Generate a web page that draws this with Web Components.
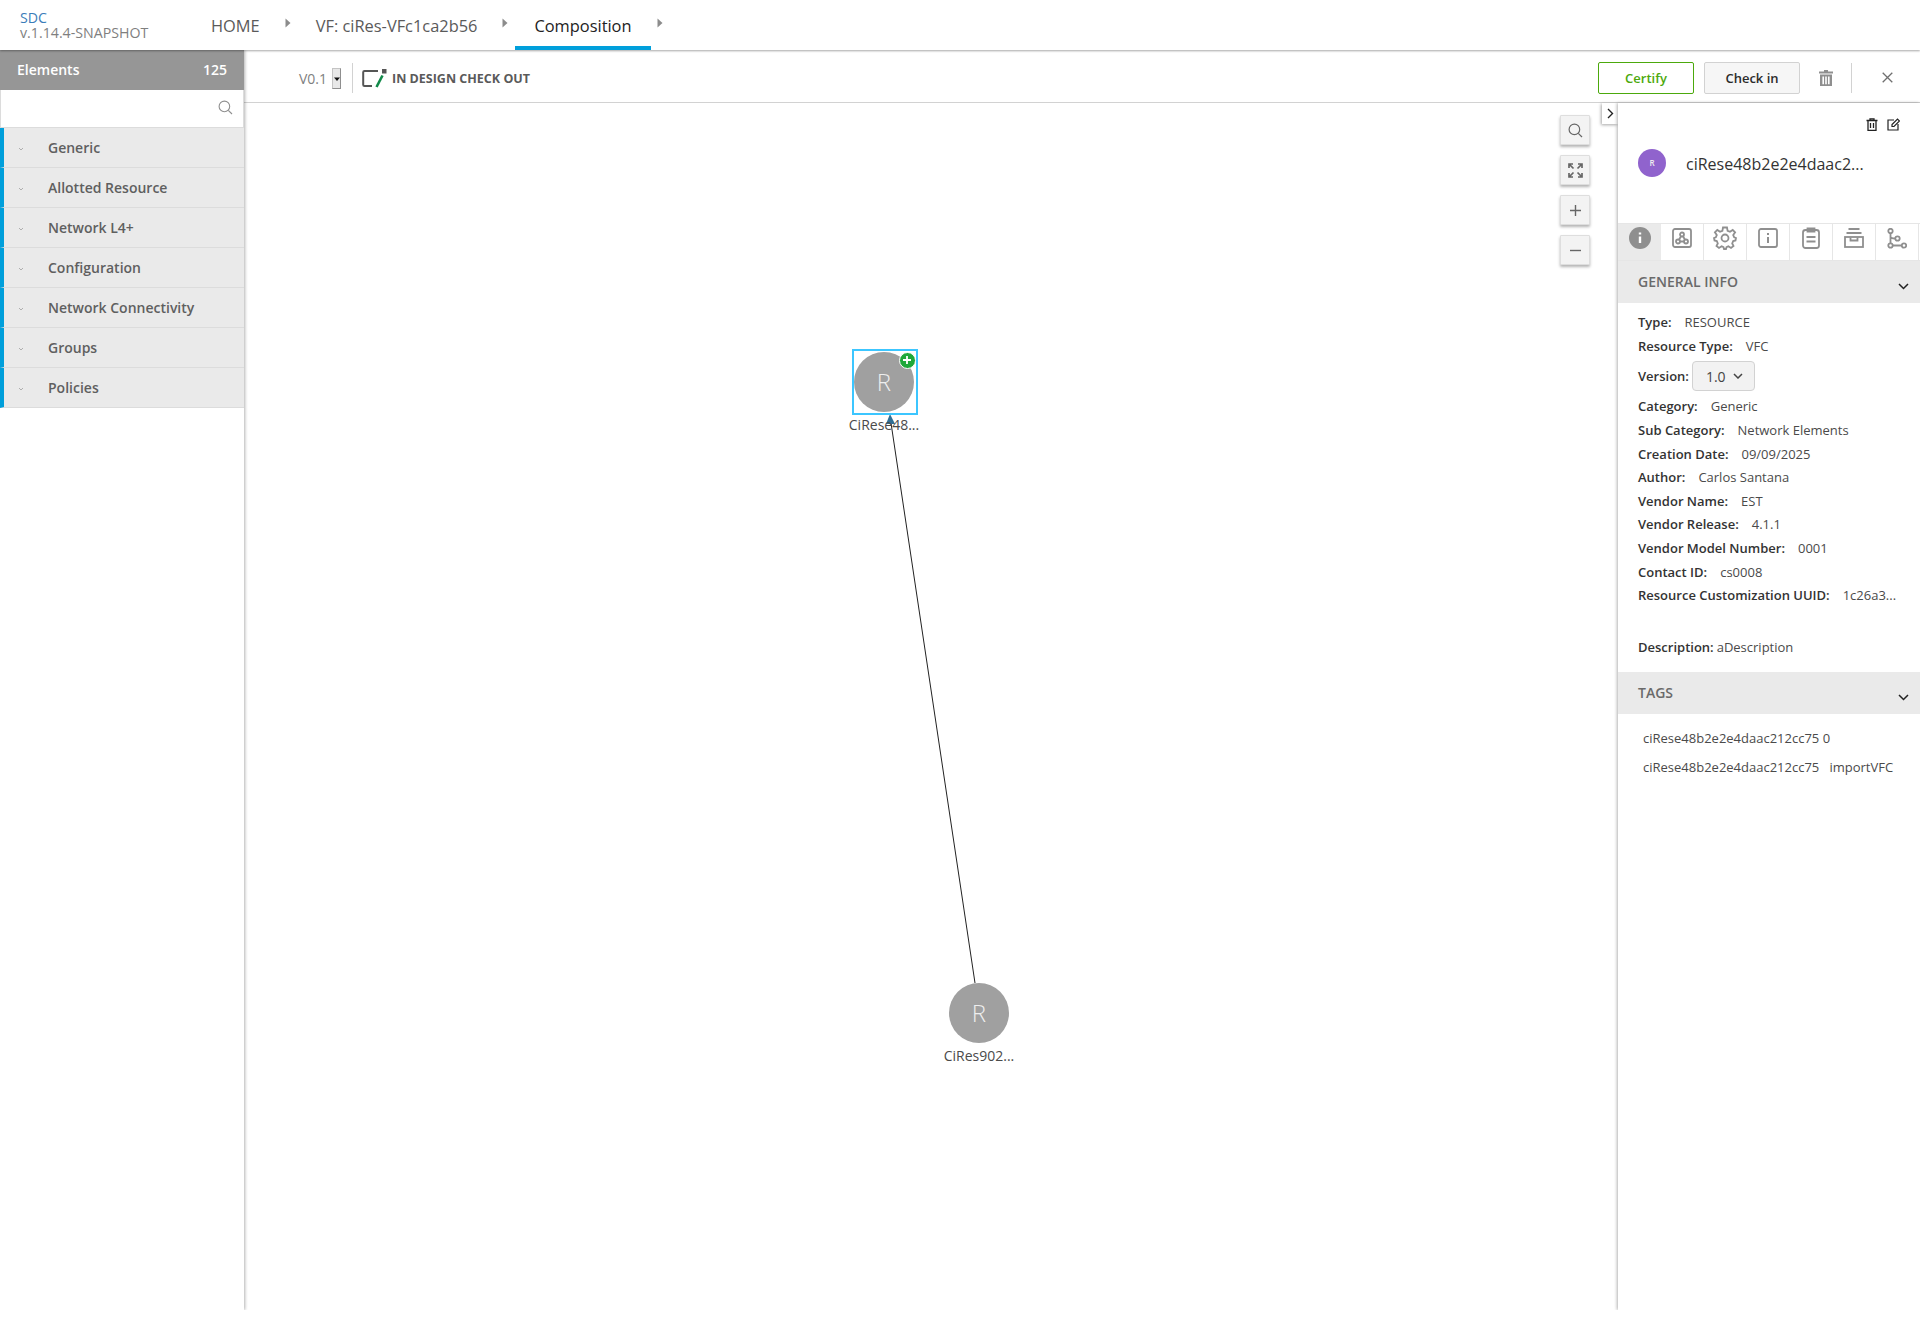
<!DOCTYPE html>
<html lang="en">
<head>
<meta charset="UTF-8" />
<title>SDC Composition</title>
<style>
  html, body { margin: 0; padding: 0; background: #fff; }
  body { font-family: "Open Sans", "Liberation Sans", sans-serif; color: #5a5a5a; }
</style>
</head>
<body>
<sdc-app></sdc-app>

<script>
  // small helper, every element just sets its html in an open shadow root
  class Base extends HTMLElement {
    connectedCallback() {
      if (this.shadowRoot) return;
      this.attachShadow({ mode: "open" });
      this.shadowRoot.innerHTML = this.render();
    }
  }

  class SdcApp extends Base {
    render() {
      return `<style>
        :host { display: flex; flex-direction: column; width: 1920px; height: 1310px; }
        .main { display: flex; flex: 1; min-height: 0; }
        .center { flex: 1; display: flex; flex-direction: column; min-width: 0; }
        .work { flex: 1; display: flex; min-height: 0; }
      </style>
      <sdc-header></sdc-header>
      <div class="main">
        <sdc-sidebar></sdc-sidebar>
        <div class="center">
          <sdc-toolbar></sdc-toolbar>
          <div class="work">
            <sdc-canvas></sdc-canvas>
            <sdc-panel></sdc-panel>
          </div>
        </div>
      </div>`;
    }
  }

  class SdcHeader extends Base {
    render() {
      const arrow = `<span class="arrow"><svg width="6" height="10" viewBox="0 0 6 10"><path d="M0.5 0.5 L5.5 5 L0.5 9.5Z" fill="#8c8c8c"/></svg></span>`;
      return `<style>
        :host { display: flex; height: 50px; box-sizing: border-box; background: #fff; position: relative; z-index: 3; box-shadow: 0 1px 2px rgba(0,0,0,.35); }
        .logo { width: 192px; box-sizing: border-box; padding: 10px 0 0 20px; font-size: 14.2px; line-height: 15px; color: #7f7f7f; }
        .logo b { display: block; font-weight: 400; color: #3b7db9; }
        .item { box-sizing: border-box; height: 50px; padding: 1px 19px 0; line-height: 50px; font-size: 16.4px; color: #5a5a5a; white-space: nowrap; }
        .item.on { color: #222; border-bottom: 4px solid #009fdb; margin-left: 1px; }
        .arrow { width: 18px; display: flex; justify-content: center; padding-top: 18px; box-sizing: border-box; }
      </style>
      <div class="logo"><b>SDC</b>v.1.14.4-SNAPSHOT</div>
      <div class="item">HOME</div>${arrow}
      <div class="item">VF: ciRes-VFc1ca2b56</div>${arrow}
      <div class="item on">Composition</div>${arrow}`;
    }
  }

  class SdcSidebar extends Base {
    render() {
      const names = ["Generic", "Allotted Resource", "Network L4+", "Configuration", "Network Connectivity", "Groups", "Policies"];
      return `<style>
        :host { display: block; width: 244px; flex: none; background: #fff; box-shadow: 1px 0 3px rgba(0,0,0,.3); position: relative; z-index: 2; }
        .top { height: 40px; box-sizing: border-box; padding: 0 17px 2px; background: #969696; color: #fff; display: flex; justify-content: space-between; align-items: center; font-size: 14px; font-weight: 600; }
        .search { height: 38px; box-sizing: border-box; border: 1px solid #dcdcdc; border-top: 0; background: #fff; display: flex; justify-content: flex-end; align-items: center; padding: 0 10px 2px 0; }
        .row { height: 40px; box-sizing: border-box; background: #eaeaea; border-left: 4px solid #009fdb; border-bottom: 1px solid #dcdcdc; display: flex; align-items: center; font-size: 14px; font-weight: 600; color: #5f5f5f; padding-left: 14px; }
        .row svg { width: 6px; margin-right: 24px; margin-top: 2px; }
      </style>
      <div class="top"><span>Elements</span><span>125</span></div>
      <div class="search"><svg width="15" height="15" viewBox="0 0 15 15" fill="none" stroke="#8f8f8f" stroke-width="1.1"><circle cx="6.4" cy="6.4" r="5.3"/><path d="M10.3 10.3 L14 14"/></svg></div>
      ${names.map(n => `<div class="row"><svg height="4" viewBox="0 0 6 4"><path d="M1 1 L3 3 L5 1" fill="none" stroke="#a0a0a0" stroke-width=".8"/></svg>${n}</div>`).join("")}`;
    }
  }

  class SdcToolbar extends Base {
    render() {
      return `<style>
        :host { display: flex; align-items: center; height: 53px; box-sizing: border-box; border-bottom: 1px solid #d2d2d2; padding: 3px 0 0 55px; background: #fff; }
        .ver { font-size: 14px; color: #7f7f7f; margin-top: 2px; }
        .sel { width: 9px; height: 21px; margin: 2px 0 0 5px; box-sizing: border-box; background: #e8e8e8; border: 1px solid #c4c4c4; border-right-color: #8f8f8f; border-bottom-color: #8f8f8f; display: flex; align-items: center; justify-content: center; }
        .sep { width: 1px; height: 30px; background: #d2d2d2; }
        .state { font-size: 12.5px; font-weight: 700; color: #5a5a5a; margin: 2px 0 0 5px; }
        .btn { box-sizing: border-box; width: 96px; height: 32px; border-radius: 2px; display: flex; align-items: center; justify-content: center; font-size: 13px; font-weight: 600; }
        .cert { margin-left: auto; border: 1px solid #4ca90c; color: #4ca90c; }
        .check { margin-left: 10px; border: 1px solid #d2d2d2; background: #f6f6f6; color: #2b2b2b; }
        svg { display: block; }
      </style>
      <span class="ver">V0.1</span>
      <span class="sel"><svg width="6" height="4" viewBox="0 0 6 4"><path d="M0 0.5H6L3 4Z" fill="#111"/></svg></span>
      <span class="sep" style="margin-left:11px"></span>
      <svg style="margin-left:9px" width="25" height="20" viewBox="0 0 25 20">
        <path d="M16 3H2.5A1.300 1.300 0 0 0 1.200 4.300V16.700A1.300 1.300 0 0 0 2.500 18H10" fill="none" stroke="#555" stroke-width="2"/>
        <rect x="20" y="1" width="4.500" height="4.500" fill="#555"/>
        <path d="M20.500 7.500L14.500 19" stroke="#128a4a" stroke-width="2.600"/>
      </svg>
      <span class="state">IN DESIGN CHECK OUT</span>
      <span class="btn cert">Certify</span>
      <span class="btn check">Check in</span>
      <svg style="margin-left:19px" width="14" height="16" viewBox="0 0 14 16" fill="#8f8f8f"><path d="M5 0H9V1.500H14V3.500H0V1.500H5Z"/><path d="M1 4.500H13V16H1ZM3.400 6.500V14.300H5V6.500ZM6.200 6.500V14.300H7.800V6.500ZM9 6.500V14.300H10.600V6.500Z" fill-rule="evenodd"/></svg>
      <span class="sep" style="margin-left:18px"></span>
      <svg style="margin:0 27px 0 30px" width="11" height="11" viewBox="0 0 11 11" stroke="#6f6f6f" stroke-width="1.300"><path d="M.7 .7L10.300 10.300M10.300 .7L.7 10.300"/></svg>`;
    }
  }

  class SdcNode extends Base {
    render() {
      const sel = this.hasAttribute("selected");
      return `<style>
        :host { position: absolute; left: ${this.getAttribute("x")}px; top: ${this.getAttribute("y")}px; width: 0; height: 0; }
        .c { position: absolute; left: -30px; top: -30px; width: 60px; height: 60px; border-radius: 50%; background: #a0a0a0; color: #eee; font-size: 24px; font-weight: 300; line-height: 60px; text-align: center; }
        .box { position: absolute; left: -32.500px; top: -33px; width: 66px; height: 66px; box-sizing: border-box; border: 2px solid #3cc6ff; }
        .plus { position: absolute; left: 14.500px; top: -30.500px; width: 17px; height: 17px; box-sizing: border-box; border-radius: 50%; background: #1ea83a; border: 1.500px solid #fff; }
        .plus svg { display: block; }
        .label { position: absolute; left: -50px; width: 100px; top: 33px; text-align: center; font-size: 14px; line-height: 20px; color: #4a4a4a; white-space: nowrap; }
      </style>
      <div class="c">R</div>
      ${sel ? `<div class="box"></div><div class="plus"><svg width="14" height="14" viewBox="0 0 14 14"><path d="M7 3V11M3 7H11" stroke="#fff" stroke-width="1.800"/></svg></div>` : ""}
      <div class="label"><slot></slot></div>`;
    }
  }

  class SdcZoomBtn extends Base {
    render() {
      return `<style>
        :host { display: flex; width: 30px; height: 30px; box-sizing: border-box; background: #f3f3f3; border: 1px solid #dedede; box-shadow: 0 2px 3px rgba(0,0,0,.3); align-items: center; justify-content: center; border-radius: 1px; }
      </style><slot></slot>`;
    }
  }

  class SdcCanvas extends Base {
    render() {
      return `<style>
        :host { display: block; flex: 1; position: relative; background: #fff; }
        .edge { position: absolute; left: 0; top: 0; width: 100%; height: 100%; }
        .zoom { position: absolute; right: 28px; top: 12px; display: flex; flex-direction: column; gap: 10px; }
        .tab { position: absolute; right: 0; top: 0; width: 16px; height: 21px; background: #fff; box-shadow: -1px 1px 3px rgba(0,0,0,.35); display: flex; align-items: center; justify-content: center; }
        svg { display: block; }
      </style>
      <svg class="edge">
        <line x1="731" y1="880" x2="647" y2="320" stroke="#222" stroke-width="1"/>
        <path d="M646 311 L651 321 L642 321Z" fill="#2f6f95"/>
      </svg>
      <sdc-node x="640" y="279" selected>CiRese48...</sdc-node>
      <sdc-node x="735" y="910">CiRes902...</sdc-node>
      <div class="zoom">
        <sdc-zoom-btn><svg width="15" height="15" viewBox="0 0 15 15" fill="none" stroke="#666" stroke-width="1.200"><circle cx="6.400" cy="6.400" r="5.300"/><path d="M10.300 10.300L14 14"/></svg></sdc-zoom-btn>
        <sdc-zoom-btn><svg width="15" height="15" viewBox="0 0 15 15" fill="none" stroke="#666" stroke-width="1.700"><path d="M1 5V1H5M1 1L5.500 5.500M10 1H14V5M14 1L9.500 5.500M1 10V14H5M1 14L5.500 9.500M14 10V14H10M14 14L9.500 9.500"/></svg></sdc-zoom-btn>
        <sdc-zoom-btn><svg width="13" height="13" viewBox="0 0 13 13"><path d="M6.500 1V12M1 6.500H12" stroke="#666" stroke-width="1.400"/></svg></sdc-zoom-btn>
        <sdc-zoom-btn><svg width="13" height="13" viewBox="0 0 13 13"><path d="M1 6.500H12" stroke="#666" stroke-width="1.400"/></svg></sdc-zoom-btn>
      </div>
      <div class="tab"><svg width="7" height="11" viewBox="0 0 7 11"><path d="M1 1L5.500 5.500L1 10" fill="none" stroke="#222" stroke-width="1.400"/></svg></div>`;
    }
  }

  class SdcRow extends Base {
    render() {
      return `<style>
        :host { display: flex; align-items: center; height: 23.600px; padding-left: 20px; font-size: 13px; color: #4a4a4a; white-space: nowrap; }
        b { font-weight: 600; color: #333; margin-right: 13px; }
        :host([tight]) b { margin-right: 3px; }
      </style><b>${this.getAttribute("label")}</b><slot></slot>`;
    }
  }

  class SdcSection extends Base {
    render() {
      return `<style>
        :host { display: block; }
        .head { height: 42px; box-sizing: border-box; background: #eaeaea; display: flex; align-items: center; justify-content: space-between; padding: 0 11px 2px 20px; font-size: 14px; font-weight: 600; color: #6a6a6a; }
        .head svg { margin-top: 10px; }
      </style>
      <div class="head"><span>${this.getAttribute("title")}</span><svg width="11" height="7" viewBox="0 0 11 7"><path d="M1 1L5.500 5.500L10 1" fill="none" stroke="#222" stroke-width="1.500"/></svg></div>
      <slot></slot>`;
    }
  }

  class SdcPanel extends Base {
    render() {
      const s = `fill="none" stroke="#8f8f8f" stroke-width="1.800"`;
      const tabs = [
        `<svg width="20" height="20" viewBox="0 0 20 20" ${s}><rect x="1" y="1" width="18" height="18" rx="2"/><circle cx="10" cy="6.500" r="2"/><circle cx="6" cy="13.500" r="2"/><circle cx="14" cy="13.500" r="2"/><path d="M9 8.300L7 11.800M11 8.300L13 11.800M8 13.500H12"/></svg>`,
        `<svg width="24" height="24" viewBox="0 0 24 24" ${s}><circle cx="12" cy="12" r="3.500"/><path d="M10 1.500H14L14.600 4.800L17 5.800L19.700 3.900L22.100 6.300L20.200 9L21.200 11.400L23 12L22.500 14.500L20.200 15L19.200 17.400L20.500 20L18 22L15.400 20.300L13.500 21.200L13 23H11L10.500 21.200L8.600 20.300L6 22L3.500 20L4.800 17.400L3.800 15L1.500 14.500L1 12L2.800 11.400L3.800 9L1.900 6.300L4.300 3.900L7 5.800L9.400 4.800Z"/></svg>`,
        `<svg width="20" height="20" viewBox="0 0 20 20" ${s}><rect x="1" y="1" width="18" height="18" rx="2"/><path d="M10 9V15" stroke-width="2"/><path d="M10 5V7" stroke-width="2"/></svg>`,
        `<svg width="18" height="22" viewBox="0 0 18 22" ${s}><rect x="1" y="3" width="16" height="18" rx="2.500"/><path d="M5.500 4.500V1.500H12.500V4.500ZM4.500 10H13.500M4.500 14.500H13.500"/></svg>`,
        `<svg width="20" height="20" viewBox="0 0 20 20" ${s}><path d="M4.500 1H15.500M2.500 5H17.500"/><rect x="1" y="9" width="18" height="10"/><path d="M6.500 9.500V12.500H13.500V9.500"/></svg>`,
        `<svg width="20" height="21" viewBox="0 0 20 21" ${s}><circle cx="3.500" cy="3" r="2.200"/><circle cx="3.500" cy="17.500" r="2.200"/><circle cx="17" cy="17.500" r="2.200"/><circle cx="10.500" cy="10.500" r="2.200"/><path d="M3.500 5.200V15.300M5.700 17.500H14.800M3.500 8.500C3.500 10 5 10.500 8.300 10.500"/></svg>`
      ];
      return `<style>
        :host { display: block; width: 302px; flex: none; box-sizing: border-box; background: #fff; box-shadow: -1px 0 3px rgba(0,0,0,.3); position: relative; z-index: 1; }
        .acts { display: flex; justify-content: flex-end; gap: 9px; padding: 15px 20px 0 0; box-sizing: border-box; height: 32px; }
        .who { display: flex; align-items: center; height: 28px; padding-left: 20px; margin-top: 14px; }
        .ava { width: 28px; height: 28px; border-radius: 50%; background: #9063cd; color: #eee; font-size: 8px; line-height: 28px; text-align: center; font-weight: 600; }
        .name { margin-left: 20px; padding-top: 2px; font-size: 16px; color: #333; white-space: nowrap; }
        .tabs { display: flex; box-sizing: border-box; height: 38px; margin-top: 46px; border-top: 1px solid #e6e6e6; border-bottom: 1px solid #e6e6e6; }
        .tabs div { width: 43px; display: flex; justify-content: center; align-items: center; border-right: 1px solid #e6e6e6; box-sizing: border-box; padding-bottom: 8px; }
        .tabs div.on { background: #eaeaea; border-right: 0; }
        .info { padding: 7px 0 0; height: 369px; box-sizing: border-box; }
        .desc { margin-top: 28px; }
        .tag { padding-left: 25px; font-size: 13px; color: #4a4a4a; height: 29px; line-height: 29px; white-space: pre; }
        .tags { padding-top: 10px; }
        .ver { display: flex; align-items: center; gap: 7px; height: 30px; padding: 0 11px 0 13px; box-sizing: border-box; margin-left: -10px; border: 1px solid #d2d2d2; border-radius: 4px; background: #f2f2f2; font-size: 14px; color: #444; }
        svg { display: block; }
      </style>
      <div class="acts">
        <svg width="12" height="13" viewBox="0 0 12 13" fill="none" stroke="#222" stroke-width="1.300"><path d="M0.500 2.500H11.500M4 2.500V.8H8V2.500M2 2.500V12.300H10V2.500M4.500 5V10M7.500 5V10"/></svg>
        <svg width="13" height="13" viewBox="0 0 13 13" fill="none" stroke="#222" stroke-width="1.200"><path d="M7 2H1V12H11V6"/><path d="M5 8.500V6.500L10.500 1L12.500 3L7 8.500Z"/></svg>
      </div>
      <div class="who"><div class="ava">R</div><div class="name">ciRese48b2e2e4daac2...</div></div>
      <div class="tabs">
        <div class="on"><svg width="22" height="22" viewBox="0 0 22 22"><circle cx="11" cy="11" r="11" fill="#8f8f8f"/><path d="M11 9.500V16M11 5.500V7.500" stroke="#fff" stroke-width="2.400"/></svg></div>
        ${tabs.map(t => `<div>${t}</div>`).join("")}
      </div>
      <sdc-section title="GENERAL INFO">
        <div class="info">
          <sdc-row label="Type:" style="height:24.600px">RESOURCE</sdc-row>
          <sdc-row label="Resource Type:">VFC</sdc-row>
          <div style="display:flex;align-items:center;height:36.400px">
            <sdc-row label="Version:" style="height:30px"><span class="ver">1.0 <svg width="10" height="6" viewBox="0 0 10 6"><path d="M1 1L5 5L9 1" fill="none" stroke="#444" stroke-width="1.500"/></svg></span></sdc-row>
          </div>
          <sdc-row label="Category:">Generic</sdc-row>
          <sdc-row label="Sub Category:">Network Elements</sdc-row>
          <sdc-row label="Creation Date:">09/09/2025</sdc-row>
          <sdc-row label="Author:">Carlos Santana</sdc-row>
          <sdc-row label="Vendor Name:">EST</sdc-row>
          <sdc-row label="Vendor Release:">4.1.1</sdc-row>
          <sdc-row label="Vendor Model Number:">0001</sdc-row>
          <sdc-row label="Contact ID:">cs0008</sdc-row>
          <sdc-row label="Resource Customization UUID:">1c26a3...</sdc-row>
          <div class="desc"><sdc-row label="Description:" tight>aDescription</sdc-row></div>
        </div>
      </sdc-section>
      <sdc-section title="TAGS">
        <div class="tags">
          <div class="tag">ciRese48b2e2e4daac212cc75 0</div>
          <div class="tag">ciRese48b2e2e4daac212cc75   importVFC</div>
        </div>
      </sdc-section>`;
    }
  }

  customElements.define("sdc-header", SdcHeader);
  customElements.define("sdc-sidebar", SdcSidebar);
  customElements.define("sdc-toolbar", SdcToolbar);
  customElements.define("sdc-node", SdcNode);
  customElements.define("sdc-zoom-btn", SdcZoomBtn);
  customElements.define("sdc-canvas", SdcCanvas);
  customElements.define("sdc-row", SdcRow);
  customElements.define("sdc-section", SdcSection);
  customElements.define("sdc-panel", SdcPanel);
  customElements.define("sdc-app", SdcApp);
</script>
</body>
</html>
